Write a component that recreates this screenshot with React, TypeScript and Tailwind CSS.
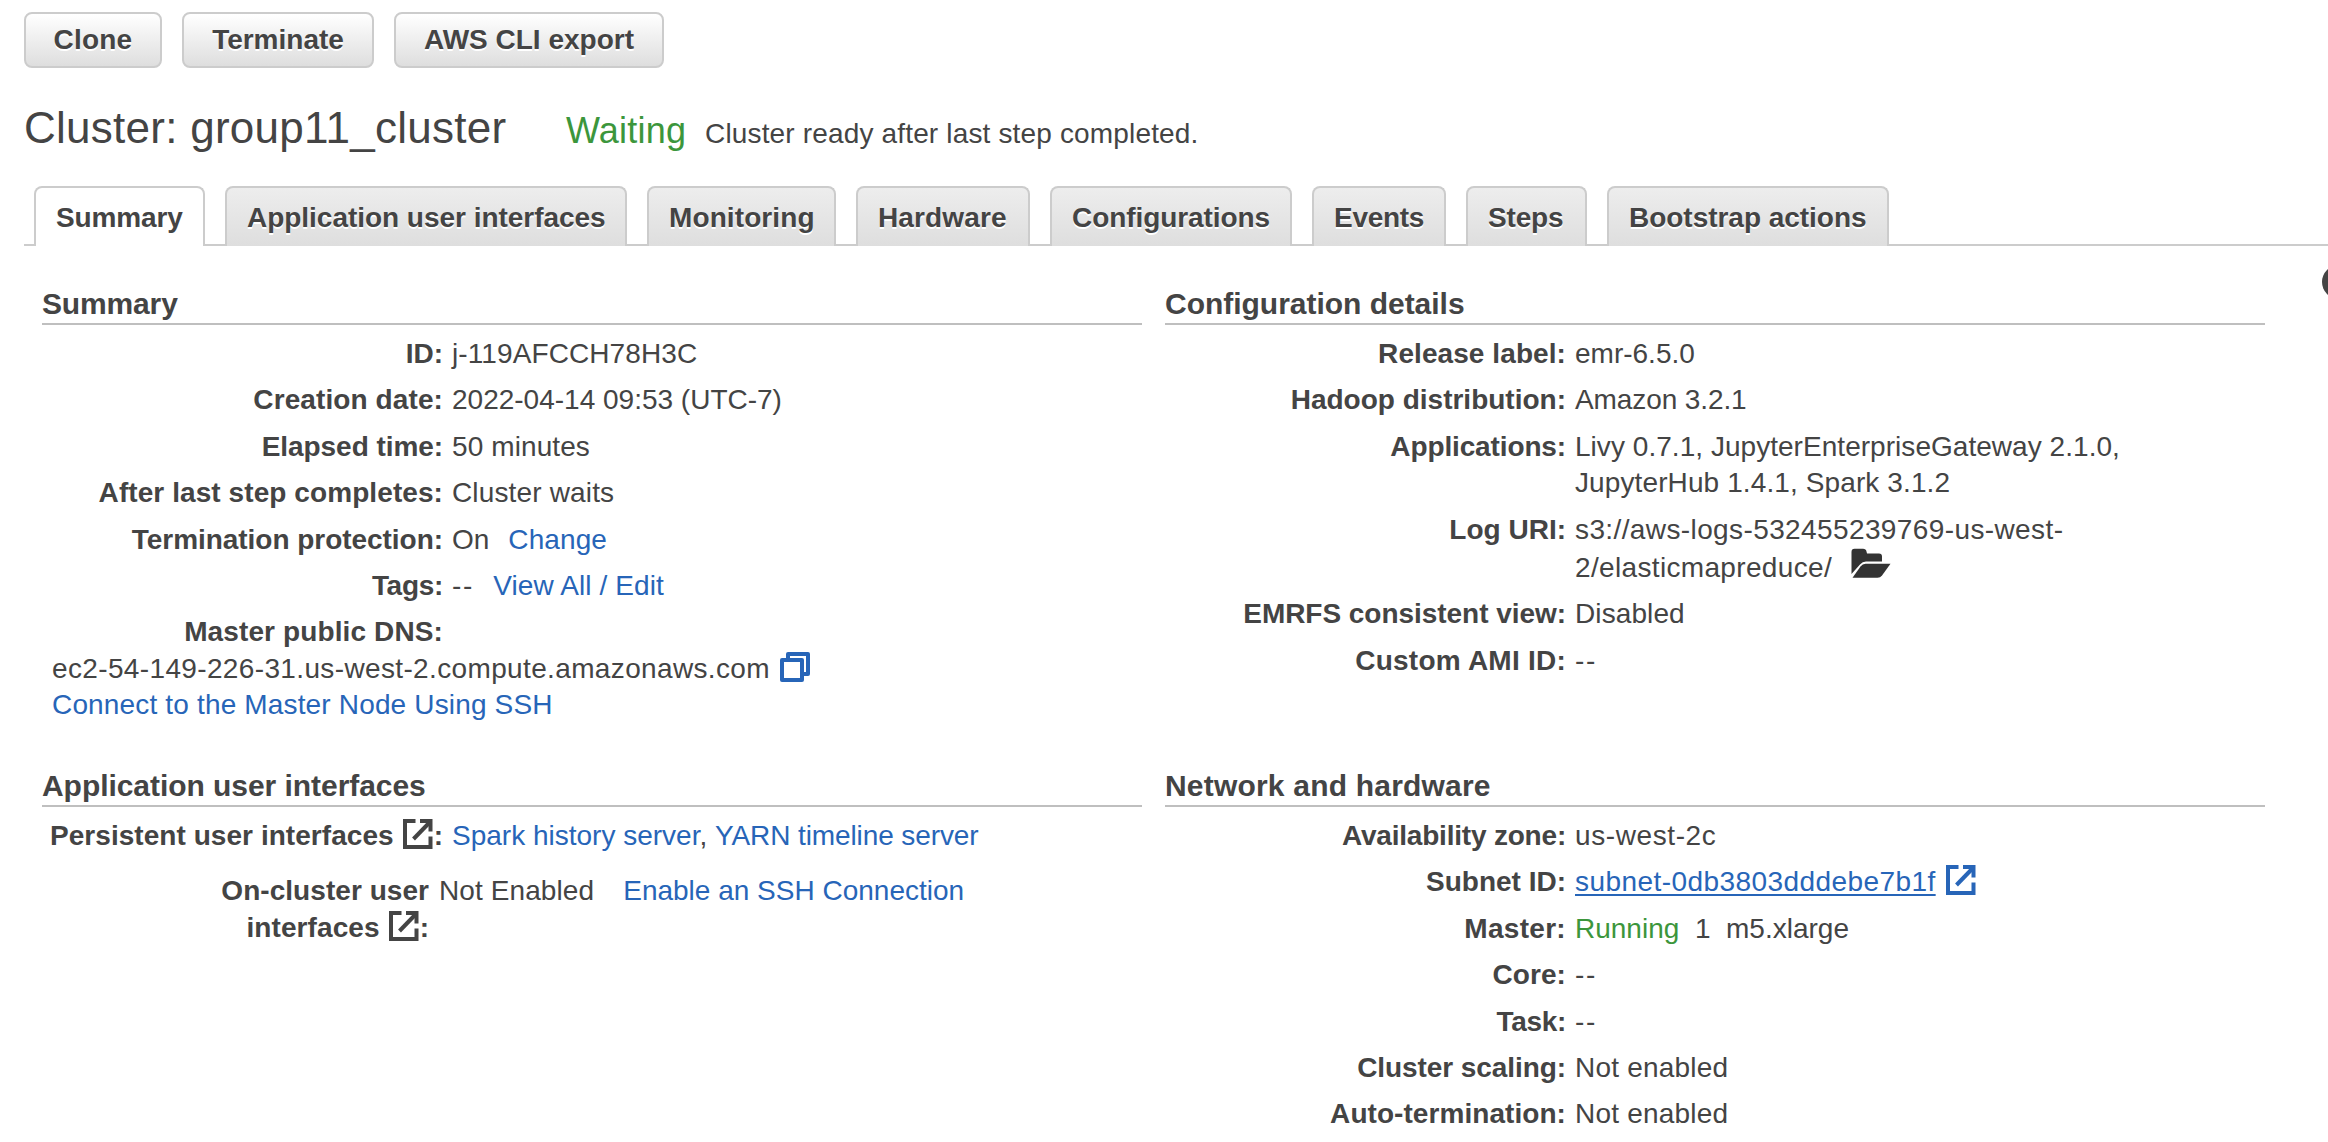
import type { ReactNode } from "react";

const LINK = "text-[#2765b8]";

function ExternalIcon({ className = "" }: { className?: string }) {
  return (
    <svg viewBox="0 0 30 30" className={`inline-block h-[30px] w-[30px] shrink-0 ${className}`} fill="none" stroke="currentColor" strokeWidth="4">
      <path d="M12.5 2H2V28H27.5V17.5" />
      <path d="M10.5 20L26 4" strokeWidth="4" />
      <path d="M17 2H27.5V12.5" />
    </svg>
  );
}

function CopyIcon() {
  return (
    <svg viewBox="0 0 30 30" className={`ml-[10px] mt-[1px] h-[30px] w-[30px] ${LINK}`} fill="none" stroke="currentColor" strokeWidth="4" strokeLinejoin="round">
      <path d="M8 6.5V2H28V22H23.5" />
      <rect x="2" y="8" width="20" height="20" />
    </svg>
  );
}

function FolderIcon() {
  return (
    <svg viewBox="0 0 40 30" className="ml-[19px] h-[30px] w-[40px] text-[#333]" fill="currentColor">
      <path d="M0.5 26V4Q0.5 0.8 3.5 0.8H12Q15 0.8 15.5 3.5L16 5.5H28Q31 5.5 31 8.5V13.5H15Q11.5 13.5 9 16.5Z" />
      <path d="M1.5 29.8L9.5 18.5Q11.5 15.8 14.5 15.8H39.5L31 27.5Q29.3 29.8 26.5 29.8Z" />
    </svg>
  );
}

function Button({ width, children }: { width: string; children: ReactNode }) {
  return (
    <button className={`${width} h-14 rounded-lg border-2 border-[#ccc] bg-linear-to-b from-white to-[#dedede] pt-2 pb-[7px] text-center leading-[36.4px] font-bold text-shadow-[0_2px_0_#fff]`}>
      {children}
    </button>
  );
}

function Tab({ width, active = false, children }: { width: string; active?: boolean; children: ReactNode }) {
  const look = active
    ? "bg-white"
    : "bg-linear-to-b from-[#ededed] to-[#dedede] text-shadow-[0_2px_0_#fff]";
  return (
    <div className={`${width} ${look} -mb-[2px] h-[60px] rounded-t-lg border-2 border-b-0 border-[#ccc] pt-3 pl-5 leading-[36.4px] font-bold whitespace-nowrap`}>
      {children}
    </div>
  );
}

function Section({ title, spacing, children }: { title: string; spacing: string; children: ReactNode }) {
  return (
    <section>
      <h2 className={`mb-[6px] border-b-2 border-[#bfbfbf] text-[30px] leading-[39px] font-bold ${spacing}`}>{title}</h2>
      {children}
    </section>
  );
}

function Row({ label, spacing = "", children }: { label: ReactNode; spacing?: string; children?: ReactNode }) {
  return (
    <div className="flex gap-[9px] py-[5px] whitespace-nowrap">
      <div className={`w-[401px] text-right font-bold ${spacing}`}>{label}</div>
      <div>{children}</div>
    </div>
  );
}

const Dashes = () => <span className="tracking-[1.8px]">--</span>;

export default function App() {
  return (
    <div className="relative h-[1142px] w-full overflow-hidden bg-white pt-3 pl-6 font-['Liberation_Sans',Arial,sans-serif] text-[28px] leading-[36.4px] text-[#444]">
      <div className="flex gap-5">
        <Button width="w-[138px]"><span className="tracking-[0.2px]">Clone</span></Button>
        <Button width="w-[192px]">Terminate</Button>
        <Button width="w-[270px]">AWS CLI export</Button>
      </div>

      <div className="mt-[31px] flex items-baseline whitespace-nowrap">
        <h1 className="w-[542px] text-[44px] leading-[57px] tracking-[0.26px]">Cluster: group11_cluster</h1>
        <span className="w-[139px] text-[36px] leading-[46px] tracking-[0.2px] text-[#3c963c]">Waiting</span>
        <span className="tracking-[0.16px]">Cluster ready after last step completed.</span>
      </div>

      <nav className="mt-[30px] flex h-[60px] gap-5 border-b-2 border-[#ccc] pl-[10px]">
        <Tab width="w-[171px]" active><span className="tracking-[-0.15px]">Summary</span></Tab>
        <Tab width="w-[402px]"><span className="tracking-[-0.03px]">Application user interfaces</span></Tab>
        <Tab width="w-[189px]"><span className="tracking-[0.1px]">Monitoring</span></Tab>
        <Tab width="w-[174px]"><span className="tracking-[0.14px]">Hardware</span></Tab>
        <Tab width="w-[242px]"><span className="tracking-[-0.08px]">Configurations</span></Tab>
        <Tab width="w-[134px]"><span className="tracking-[-0.3px]">Events</span></Tab>
        <Tab width="w-[121px]"><span className="tracking-[-0.15px]">Steps</span></Tab>
        <Tab width="w-[282px]"><span className="tracking-[-0.03px]">Bootstrap actions</span></Tab>
      </nav>

      <main className="mt-[38px] ml-[18px] grid w-[2223px] grid-cols-[1100px_1100px] grid-rows-[482px_376px] gap-x-[23px]">
        <Section title="Summary" spacing="tracking-[-0.15px]">
          <Row label="ID:"><span className="tracking-[0.1px]">j-119AFCCH78H3C</span></Row>
          <Row label="Creation date:" spacing="tracking-[0.1px]">2022-04-14 09:53 (UTC-7)</Row>
          <Row label="Elapsed time:" spacing="tracking-[-0.06px]"><span className="tracking-[0.1px]">50 minutes</span></Row>
          <Row label="After last step completes:" spacing="tracking-[0.08px]"><span className="tracking-[0.15px]">Cluster waits</span></Row>
          <Row label="Termination protection:" spacing="tracking-[-0.04px]">
            On<a className={`ml-[19px] tracking-[0.1px] ${LINK}`}>Change</a>
          </Row>
          <Row label="Tags:" spacing="tracking-[-0.3px]">
            <Dashes /><a className={`ml-[19px] tracking-[0.1px] ${LINK}`}>View All / Edit</a>
          </Row>
          <Row label="Master public DNS:" spacing="tracking-[0.12px]" />
          <div className="-mt-[5px] ml-[10px] whitespace-nowrap">
            <div className="flex h-[36.4px]">
              <span className="tracking-[0.36px]">ec2-54-149-226-31.us-west-2.compute.amazonaws.com</span>
              <CopyIcon />
            </div>
            <a className={`tracking-[0.16px] ${LINK}`}>Connect to the Master Node Using SSH</a>
          </div>
        </Section>

        <Section title="Configuration details" spacing="tracking-[-0.02px]">
          <Row label="Release label:" spacing="tracking-[0.08px]">emr-6.5.0</Row>
          <Row label="Hadoop distribution:"><span className="tracking-[-0.1px]">Amazon 3.2.1</span></Row>
          <Row label="Applications:" spacing="tracking-[-0.13px]">
            <div className="tracking-[0.04px]">Livy 0.7.1, JupyterEnterpriseGateway 2.1.0,</div>
            <div className="tracking-[0.11px]">JupyterHub 1.4.1, Spark 3.1.2</div>
          </Row>
          <Row label="Log URI:">
            <div className="tracking-[0.39px]">s3://aws-logs-532455239769-us-west-</div>
            <div className="flex h-[38.4px]">
              <span className="pt-[2px] tracking-[0.34px]">2/elasticmapreduce/</span>
              <FolderIcon />
            </div>
          </Row>
          <Row label="EMRFS consistent view:" spacing="tracking-[-0.04px]"><span className="tracking-[0.1px]">Disabled</span></Row>
          <Row label="Custom AMI ID:" spacing="tracking-[0.24px]"><Dashes /></Row>
        </Section>

        <Section title="Application user interfaces" spacing="tracking-[-0.05px]">
          <div className="flex gap-[9px] py-[5px] whitespace-nowrap">
            <div className="flex w-[401px] justify-end font-bold">
              <span className="mr-[9px] tracking-[0.05px]">Persistent user interfaces</span>
              <ExternalIcon className="mt-[1px]" />
              <span className="ml-[1px]">:</span>
            </div>
            <div>
              <a className={LINK}>Spark history server</a>, <a className={`tracking-[-0.1px] ${LINK}`}>YARN timeline server</a>
            </div>
          </div>
          <div className="mt-[9px] flex gap-[10px] py-[5px] whitespace-nowrap">
            <div className="w-[387px] font-bold">
              <div className="text-right tracking-[0.05px]">On-cluster user</div>
              <div className="flex justify-end">
                <span className="mr-[9px] tracking-[0.09px]">interfaces</span>
                <ExternalIcon className="mt-[1px]" />
                <span className="ml-[1px]">:</span>
              </div>
            </div>
            <div>
              <span className="tracking-[0.1px]">Not Enabled</span>
              <a className={`ml-[29px] ${LINK}`}>Enable an SSH Connection</a>
            </div>
          </div>
        </Section>

        <Section title="Network and hardware" spacing="tracking-[0.2px]">
          <Row label="Availability zone:" spacing="tracking-[-0.2px]"><span className="tracking-[0.6px]">us-west-2c</span></Row>
          <Row label="Subnet ID:">
            <div className={`flex h-[36.4px] ${LINK}`}>
              <a className="tracking-[0.43px] underline decoration-2 underline-offset-[3px] [text-decoration-skip-ink:none]">subnet-0db3803dddebe7b1f</a>
              <ExternalIcon className="ml-[10px] mt-[1px]" />
            </div>
          </Row>
          <Row label="Master:" spacing="tracking-[0.3px]">
            <span className="text-[#3c963c]">Running</span>{"\u00a0\u00a0"}1{"\u00a0\u00a0"}m5.xlarge
          </Row>
          <Row label="Core:" spacing="tracking-[0.1px]"><Dashes /></Row>
          <Row label="Task:" spacing="tracking-[-0.3px]"><Dashes /></Row>
          <Row label="Cluster scaling:" spacing="tracking-[-0.08px]"><span className="tracking-[0.2px]">Not enabled</span></Row>
          <Row label="Auto-termination:" spacing="tracking-[0.06px]"><span className="tracking-[0.2px]">Not enabled</span></Row>
        </Section>
      </main>

      {/* Round control that hangs over the right edge of the page */}
      <div className="absolute top-[265px] -right-[28px] size-[34px] rounded-full bg-[#444]" />
    </div>
  );
}
